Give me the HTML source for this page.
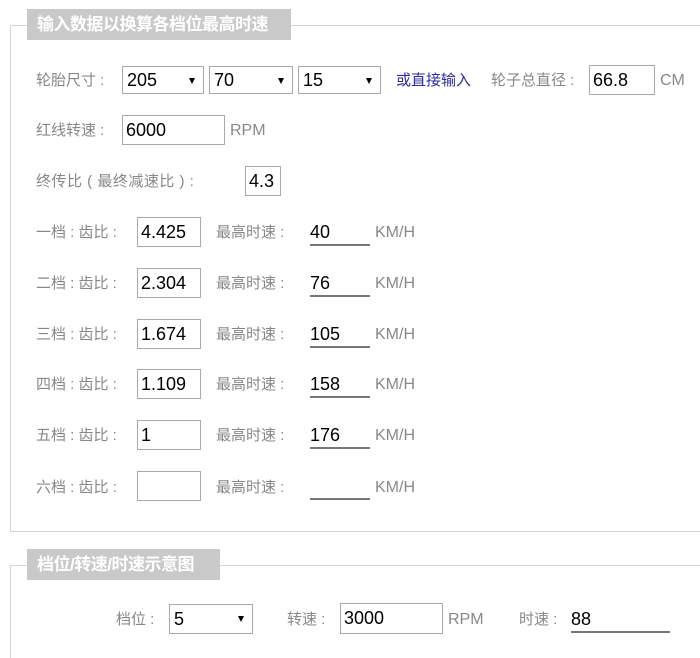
<!DOCTYPE html>
<html><head><meta charset="utf-8"><style>
*{box-sizing:border-box;margin:0;padding:0}
html,body{width:700px;height:658px;overflow:hidden}
body{background:#fff;position:relative;font-family:"Liberation Sans","Noto Sans CJK SC",sans-serif}
.fs{position:absolute;border:1px solid #d4d4d4;border-right:none}
.lg{position:absolute;background:#c9c9c9;color:#fff;font-weight:bold;font-size:17px;line-height:31px;padding-left:10px;letter-spacing:-0.5px}
.l{position:absolute;font-size:15px;color:#888;line-height:20px;white-space:nowrap}
.u{font-size:16px}
.in{position:absolute;border:1px solid #a9a9a9;font-size:18px;color:#000;line-height:28px;padding-left:3px;background:#fff}
.sel{position:absolute;border:1px solid #a9a9a9;font-size:18px;color:#000;line-height:26px;padding-left:4px;background:#fff}
.sel:after{content:"";position:absolute;right:8px;top:11px;border-left:3.5px solid transparent;border-right:3.5px solid transparent;border-top:6px solid #000}
.sp{position:absolute;border-bottom:2px solid #777;font-size:18px;color:#000;line-height:24px;height:26px;width:60px}
</style></head><body>
<div class="fs" style="left:10px;top:25px;width:700px;height:507px"></div>
<div class="lg" style="left:27px;top:9px;width:264px">输入数据以换算各档位最高时速</div>
<div class="l" style="left:36px;top:71px">轮胎尺寸 : </div>
<div class="sel" style="left:122px;top:66px;width:82px;height:28px">205</div>
<div class="sel" style="left:209px;top:66px;width:84px;height:28px">70</div>
<div class="sel" style="left:298px;top:66px;width:83px;height:28px">15</div>
<div class="l" style="left:396px;top:71px;color:#2b2b9e">或直接输入</div>
<div class="l" style="left:491px;top:71px">轮子总直径 : </div>
<div class="in" style="left:589px;top:65px;width:66px;height:30px">66.8</div>
<div class="l u" style="left:660px;top:71px">CM</div>
<div class="l" style="left:36px;top:121px">红线转速 : </div>
<div class="in" style="left:122px;top:115px;width:103px;height:30px">6000</div>
<div class="l u" style="left:230px;top:121px">RPM</div>
<div class="l" style="left:36px;top:172px;letter-spacing:0.5px">终传比 ( 最终减速比 ) : </div>
<div class="in" style="left:245px;top:166px;width:36px;height:30px">4.3</div>

<div class="l" style="left:36px;top:223px">一档 : 齿比 : </div>
<div class="in" style="left:137px;top:217px;width:64px;height:30px">4.425</div>
<div class="l" style="left:216px;top:223px">最高时速 : </div>
<div class="sp" style="left:310px;top:220px">40</div>
<div class="l u" style="left:375px;top:223px">KM/H</div>

<div class="l" style="left:36px;top:274px">二档 : 齿比 : </div>
<div class="in" style="left:137px;top:268px;width:64px;height:30px">2.304</div>
<div class="l" style="left:216px;top:274px">最高时速 : </div>
<div class="sp" style="left:310px;top:271px">76</div>
<div class="l u" style="left:375px;top:274px">KM/H</div>

<div class="l" style="left:36px;top:325px">三档 : 齿比 : </div>
<div class="in" style="left:137px;top:319px;width:64px;height:30px">1.674</div>
<div class="l" style="left:216px;top:325px">最高时速 : </div>
<div class="sp" style="left:310px;top:322px">105</div>
<div class="l u" style="left:375px;top:325px">KM/H</div>

<div class="l" style="left:36px;top:375px">四档 : 齿比 : </div>
<div class="in" style="left:137px;top:369px;width:64px;height:30px">1.109</div>
<div class="l" style="left:216px;top:375px">最高时速 : </div>
<div class="sp" style="left:310px;top:372px">158</div>
<div class="l u" style="left:375px;top:375px">KM/H</div>

<div class="l" style="left:36px;top:426px">五档 : 齿比 : </div>
<div class="in" style="left:137px;top:420px;width:64px;height:30px">1</div>
<div class="l" style="left:216px;top:426px">最高时速 : </div>
<div class="sp" style="left:310px;top:423px">176</div>
<div class="l u" style="left:375px;top:426px">KM/H</div>

<div class="l" style="left:36px;top:478px">六档 : 齿比 : </div>
<div class="in" style="left:137px;top:471px;width:64px;height:30px"></div>
<div class="l" style="left:216px;top:478px">最高时速 : </div>
<div class="sp" style="left:310px;top:474px"></div>
<div class="l u" style="left:375px;top:478px">KM/H</div>

<div class="fs" style="left:10px;top:565px;width:700px;height:120px;border-bottom:none"></div>
<div class="lg" style="left:27px;top:549px;width:193px">档位/转速/时速示意图</div>
<div class="l" style="left:116px;top:610px">档位 : </div>
<div class="sel" style="left:169px;top:604px;width:84px;height:30px;line-height:28px">5</div>
<div class="l" style="left:287px;top:610px">转速 : </div>
<div class="in" style="left:340px;top:603px;width:103px;height:31px">3000</div>
<div class="l u" style="left:448px;top:610px">RPM</div>
<div class="l" style="left:519px;top:610px">时速 : </div>
<div class="sp" style="left:571px;top:607px;width:99px">88</div>
</body></html>
